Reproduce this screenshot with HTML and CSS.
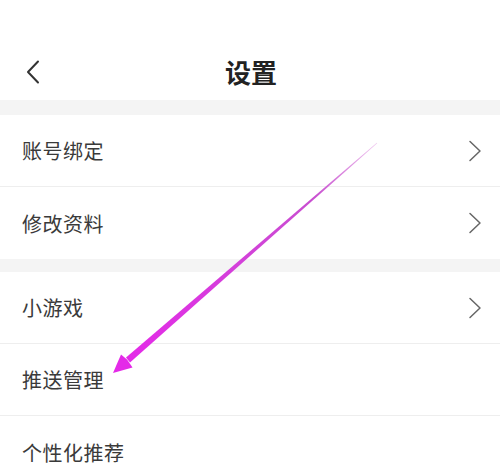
FILE: index.html
```html
<!DOCTYPE html>
<html lang="zh-CN">
<head>
<meta charset="utf-8">
<title>设置</title>
<link rel="stylesheet" href="styles.css">
</head>
<body>
<div class="page">
  <header class="header">
    <div class="nav">
      <span class="back">
        <svg width="14" height="24" viewBox="0 0 14 24"><path d="M12 1.5 L2 12 L12 22.5" fill="none" stroke="#333" stroke-width="2" stroke-linecap="round" stroke-linejoin="round"/></svg>
      </span>
      <h1 class="title">设置</h1>
    </div>
  </header>
  <div class="band band-top"></div>
  <section class="group">
    <div class="row row-line"><span class="label">账号绑定</span><span class="chev"><svg width="14" height="22" viewBox="0 0 14 22"><path d="M2 1.5 L12 11 L2 20.5" fill="none" stroke="#666" stroke-width="1.5" stroke-linecap="round" stroke-linejoin="round"/></svg></span></div>
    <div class="row"><span class="label">修改资料</span><span class="chev"><svg width="14" height="22" viewBox="0 0 14 22"><path d="M2 1.5 L12 11 L2 20.5" fill="none" stroke="#666" stroke-width="1.5" stroke-linecap="round" stroke-linejoin="round"/></svg></span></div>
  </section>
  <div class="band band-mid"></div>
  <section class="group">
    <div class="row row-line"><span class="label">小游戏</span><span class="chev"><svg width="14" height="22" viewBox="0 0 14 22"><path d="M2 1.5 L12 11 L2 20.5" fill="none" stroke="#666" stroke-width="1.5" stroke-linecap="round" stroke-linejoin="round"/></svg></span></div>
    <div class="row row-line"><span class="label">推送管理</span></div>
    <div class="row"><span class="label">个性化推荐</span></div>
  </section>
  <svg class="arrow" width="500" height="470" viewBox="0 0 500 470">
    <defs>
      <linearGradient id="g" x1="377" y1="143" x2="128" y2="360" gradientUnits="userSpaceOnUse">
        <stop offset="0" stop-color="#efc8ef"/>
        <stop offset="0.25" stop-color="#c84fd0"/>
        <stop offset="1" stop-color="#e42ae8"/>
      </linearGradient>
    </defs>
    <polygon points="377.2,143.2 376.8,142.8 126,357.5 130,362.5" fill="url(#g)"/>
    <polygon points="113,373 121,354.5 127,359.5 132.5,367.5" fill="#e42ae8"/>
  </svg>
</div>
</body>
</html>
```
FILE: styles.css
```css
* { box-sizing: border-box; }
html, body { margin: 0; padding: 0; background: #fff; }
body {
  font-family: "Noto Sans CJK SC", "Noto Sans", sans-serif;
  color: #333;
}
.page {
  position: relative;
  width: 500px;
  height: 470px;
  overflow: hidden;
  background: #fff;
}
.header {
  height: 100px;
  padding-top: 50px;
  background: #fff;
}
.nav {
  position: relative;
  height: 44px;
  display: flex;
  align-items: center;
  justify-content: center;
}
.back {
  position: absolute;
  left: 26px;
  top: 10px;
  display: flex;
}
.title {
  margin: 0;
  font-size: 26px;
  font-weight: 700;
  color: #222;
  line-height: 1;
  padding-left: 2px;
}
.band { background: #f4f4f4; }
.band-top { height: 15px; }
.band-mid { height: 13px; }
.group { background: #fff; }
.row {
  height: 72px;
  display: flex;
  align-items: center;
  justify-content: space-between;
  padding: 0 18px 0 22px;
}
.row-line { border-bottom: 1px solid #eeeeee; }
.label {
  font-size: 20px;
  color: #3a3a3a;
  letter-spacing: 0.5px;
}
.chev { display: flex; }
.arrow {
  position: absolute;
  left: 0;
  top: 0;
  pointer-events: none;
}
```
